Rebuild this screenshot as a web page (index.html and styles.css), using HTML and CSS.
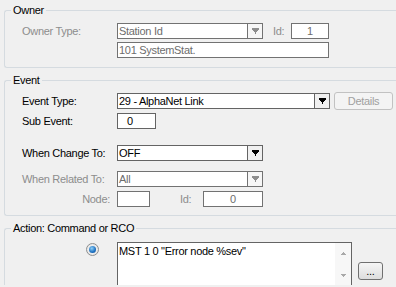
FILE: index.html
```html
<!DOCTYPE html>
<html lang="en">
<head>
  <meta charset="UTF-8" />
  <title>Event Trigger</title>
  <link rel="stylesheet" href="styles.css">
</head>
<body>
  <div class="form">
    <!-- Owner group -->
    <section class="group owner">
      <div class="group-title">Owner</div>
      <div class="row">
        <span class="label muted">Owner Type:</span>
        <div class="select off w146">
          <span class="value">Station Id</span>
          <span class="drop"><svg width="7" height="6" viewBox="0 0 7 6"><path d="M0 0h7v2h-1v1h-1v1h-1v2h-1v-2h-1v-1h-1v-1h-1z"/></svg></span>
        </div>
        <span class="id-label muted">Id:</span>
        <div class="field off center w38">1</div>
      </div>
      <div class="row">
        <span class="label"></span>
        <div class="field off w212">101 SystemStat.</div>
      </div>
    </section>

    <!-- Event group -->
    <section class="group event">
      <div class="group-title">Event</div>
      <div class="row">
        <span class="label">Event Type:</span>
        <div class="select w213">
          <span class="value">29 - AlphaNet Link</span>
          <span class="drop"><svg width="7" height="6" viewBox="0 0 7 6"><path d="M0 0h7v2h-1v1h-1v1h-1v2h-1v-2h-1v-1h-1v-1h-1z"/></svg></span>
        </div>
        <button class="btn details" disabled>Details</button>
      </div>
      <div class="row gap4">
        <span class="label">Sub Event:</span>
        <div class="field sub w39">0</div>
      </div>
      <div class="row gap16">
        <span class="label">When Change To:</span>
        <div class="select w146">
          <span class="value">OFF</span>
          <span class="drop"><svg width="7" height="6" viewBox="0 0 7 6"><path d="M0 0h7v2h-1v1h-1v1h-1v2h-1v-2h-1v-1h-1v-1h-1z"/></svg></span>
        </div>
      </div>
      <div class="row gap10">
        <span class="label muted">When Related To:</span>
        <div class="select off w146">
          <span class="value">All</span>
          <span class="drop"><svg width="7" height="6" viewBox="0 0 7 6"><path d="M0 0h7v2h-1v1h-1v1h-1v2h-1v-2h-1v-1h-1v-1h-1z"/></svg></span>
        </div>
      </div>
      <div class="row gap4">
        <span class="label muted right">Node:</span>
        <div class="field off w33"></div>
        <span class="node-id muted">Id:</span>
        <div class="field off center w60">0</div>
      </div>
    </section>

    <!-- Action group -->
    <section class="group action">
      <div class="group-title">Action: Command or RCO</div>
      <div class="row tall">
        <span class="label">
          <span class="radio"><span class="dot"></span></span>
        </span>
        <div class="memo">
          <span class="memo-text">MST 1 0 "Error node %sev"</span>
          <span class="scroll">
            <svg width="5" height="3" viewBox="0 0 5 3"><path d="M2 0h1v1h1v1h1v1h-5v-1h1v-1h1z"/></svg>
            <svg class="down" width="5" height="3" viewBox="0 0 5 3"><path d="M0 0h5v1h-1v1h-1v1h-1v-1h-1v-1h-1z"/></svg>
          </span>
        </div>
        <button class="btn more">...</button>
      </div>
    </section>
  </div>
</body>
</html>
```

FILE: styles.css
```css
/* Dialog look */
body {
  margin: 0;
  background: #f0f0f0;
  font-family: "Liberation Sans", Arial, sans-serif;
  font-size: 11px;
  letter-spacing: -0.3px;
  color: #000;
  width: 396px;
  height: 287px;
  overflow: hidden;
}
.form {
  padding: 10px 0 0 4px;
}
.group {
  border: 1px solid #d5dbe0;
  border-right: none;
  border-radius: 3px 0 0 3px;
  padding: 0 0 0 17px;
}
.group-title {
  width: max-content;
  height: 13px;
  margin: -7px 0 0 -11px;
  padding: 0 2px;
  line-height: 13px;
  background: #f0f0f0;
}
.owner {
  padding-bottom: 9px;
}
.event {
  margin-top: 12px;
  padding-bottom: 8px;
}
.action {
  margin-top: 12px;
  border-bottom: none;
  border-radius: 3px 0 0 0;
}
.row {
  display: flex;
  align-items: center;
  height: 16px;
  margin-top: 3px;
}
.group-title + .row {
  margin-top: 6px;
}
.row.gap4 { margin-top: 4px; }
.row.gap10 { margin-top: 10px; }
.row.gap16 { margin-top: 16px; }
.action .row.tall {
  align-items: flex-start;
  height: auto;
  margin-top: 7px;
}
.label {
  width: 95px;
  flex: none;
  white-space: nowrap;
}
.label.right {
  text-align: right;
  box-sizing: border-box;
  padding-right: 7px;
}
.muted {
  color: #8d8d8d;
}

/* text boxes and combo boxes */
.field,
.select {
  height: 16px;
  box-sizing: border-box;
  border: 1px solid #646464;
  background: #fff;
  line-height: 14px;
  padding-left: 1px;
  white-space: nowrap;
  overflow: hidden;
}
.field.off,
.select.off {
  border-color: #727272;
  color: #6d6d6d;
}
.field.center {
  text-align: center;
  padding-left: 0;
}
.field.sub {
  padding-left: 9px;
}
.select {
  display: flex;
  padding-left: 0;
}
.select .value {
  flex: 1;
  padding-left: 1px;
  overflow: hidden;
}
.select .drop {
  width: 14px;
  flex: none;
  border-left: 1px solid #646464;
  background: #f0f0f0;
  display: flex;
  align-items: center;
  justify-content: center;
}
.select .drop svg {
  fill: #000;
}
.select.off .drop {
  border-left-color: #727272;
  background: #f6f6f6;
}
.select.off .drop svg {
  fill: #8d8d8d;
}
.w33 { width: 33px; }
.w38 { width: 38px; }
.w39 { width: 39px; }
.w60 { width: 60px; }
.w146 { width: 146px; }
.w212 { width: 212px; }
.w213 { width: 213px; }

.id-label {
  margin-left: 10px;
  width: 18px;
}
.node-id {
  margin-left: 30px;
  width: 23px;
}

/* buttons */
.btn {
  font: inherit;
  letter-spacing: inherit;
  box-sizing: border-box;
  border-radius: 3px;
  padding: 0;
}
.details {
  width: 59px;
  height: 18px;
  margin-left: 4px;
  border: 1px solid #c2c2c2;
  background: #f4f4f4;
  color: #a0a0a0;
}
.more {
  width: 25px;
  height: 18px;
  margin: 20px 0 0 6px;
  border: 1px solid #707070;
  background: linear-gradient(#f6f6f6, #dddddd);
  color: #000;
  line-height: 12px;
}

/* radio button */
.radio {
  display: flex;
  align-items: center;
  justify-content: center;
  width: 13px;
  height: 13px;
  box-sizing: border-box;
  margin: 1px 0 0 64px;
  border: 1px solid #8e8f8f;
  border-radius: 50%;
  background: radial-gradient(#ffffff, #dcdcdc);
}
.radio .dot {
  width: 7px;
  height: 7px;
  border-radius: 50%;
  background: radial-gradient(circle at 40% 35%, #8fd0f7, #1c6fc0 60%, #0d4a8f);
}

/* multi-line command box, cut off by the window bottom */
.memo {
  width: 235px;
  height: 43px;
  box-sizing: border-box;
  border: 1px solid #646464;
  border-bottom: none;
  background: #fff;
  display: flex;
}
.memo-text {
  flex: 1;
  padding: 2px 0 0 1px;
  line-height: 13px;
}
.scroll {
  width: 16px;
  flex: none;
  background: #f7f7f7;
  display: flex;
  flex-direction: column;
  align-items: center;
}
.scroll svg {
  fill: #a9a9a9;
  margin-top: 9px;
}
.scroll svg.down {
  margin-top: 19px;
}
```
